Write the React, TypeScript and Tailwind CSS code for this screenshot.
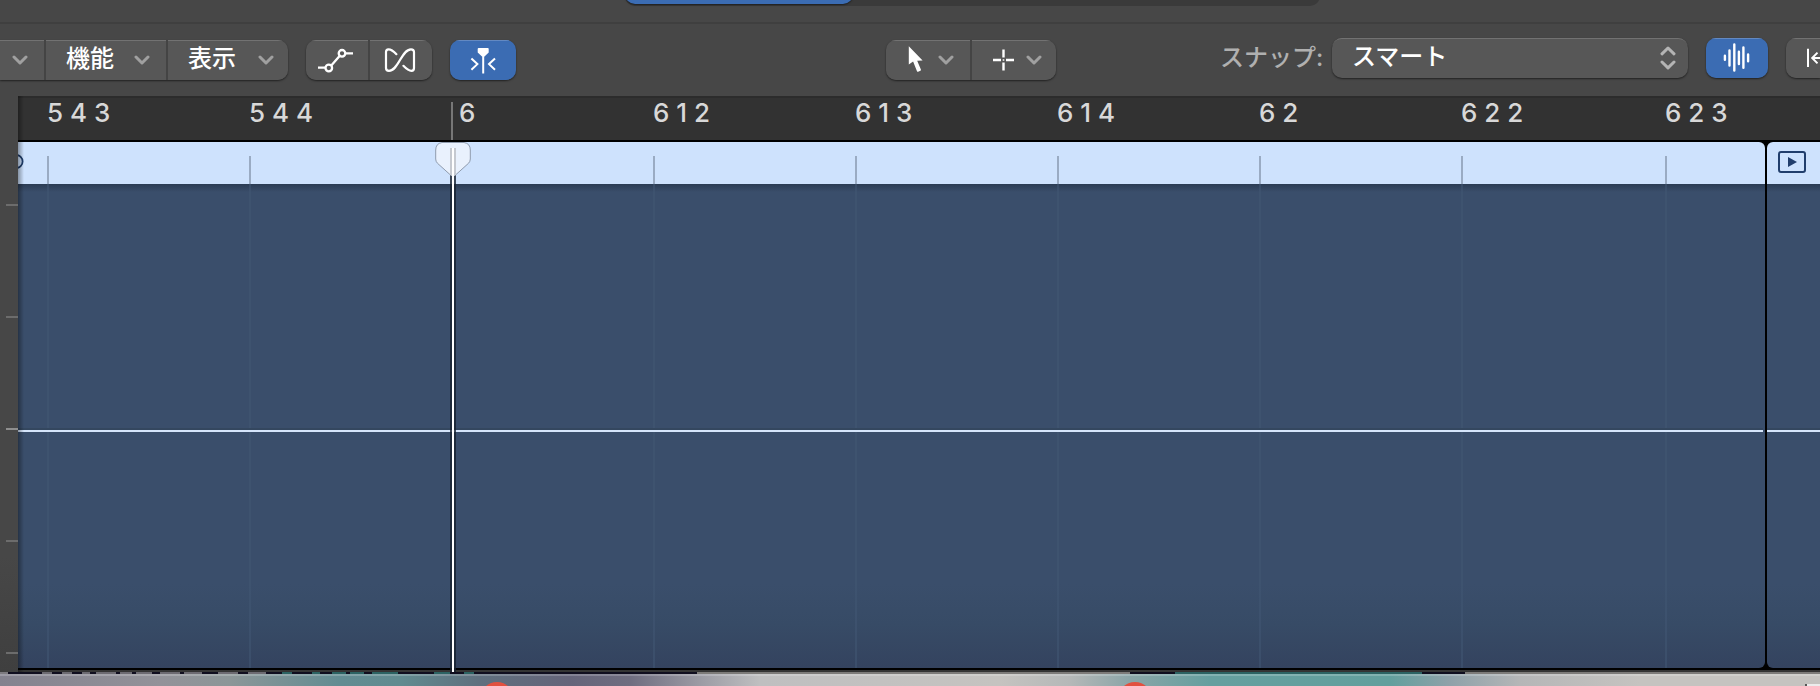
import type { ReactNode } from "react";
import clsx from "clsx";

const MARKS = [
  { label: "5 4 3" },
  { label: "5 4 4" },
  { label: "6", bar: true },
  { label: "6 1 2" },
  { label: "6 1 3" },
  { label: "6 1 4" },
  { label: "6 2" },
  { label: "6 2 2", wide: true },
  { label: "6 2 3" },
];

// what shows of the window behind, between the editor and the dock
const BEHIND = [
  "w-2 bg-[#7d7b80]",
  "w-[34px] bg-[#100e1f]",
  "w-[10px] bg-[#6d6b72]",
  "w-[10px] bg-[#100e1f]",
  "w-[10px] bg-[#6d6b72]",
  "w-[10px] bg-[#100e1f]",
  "w-[8px] bg-[#6d6b72]",
  "w-[6px] bg-[#100e1f]",
  "w-[20px] bg-[#6d6b72]",
  "w-[4px] bg-[#100e1f]",
  "w-[12px] bg-[#6d6b72]",
  "w-[4px] bg-[#100e1f]",
  "w-[16px] bg-[#6d6b72]",
  "w-[8px] bg-[#100e1f]",
  "w-[20px] bg-[#6d6b72]",
  "w-[4px] bg-[#100e1f]",
  "w-[18px] bg-[#6d6b72]",
  "w-[16px] bg-[#100e1f]",
  "w-[20px] bg-[#6d6b72]",
  "w-[10px] bg-[#100e1f]",
  "w-[18px] bg-[#6d6b72]",
  "w-[16px] bg-[#100e1f]",
  "w-[10px] bg-[#2c6363]",
  "w-[20px] bg-[#100e1f]",
  "w-[8px] bg-[#2c6363]",
  "w-[12px] bg-[#100e1f]",
  "w-[14px] bg-[#2c6363]",
  "w-[4px] bg-[#100e1f]",
  "w-[14px] bg-[#2c6363]",
  "w-[8px] bg-[#100e1f]",
  "w-[26px] bg-[#2c6363]",
  "w-[36px] bg-[#100e1f]",
  "w-[16px] bg-[#2c6363]",
  "w-[14px] bg-[#100e1f]",
  "w-[10px] bg-[#2c6363]",
  "w-[223px] bg-[#100e1f]",
  "w-[433px] bg-[#7d7b79]",
  "w-[45px] bg-[#100e1f]",
  "w-[247px] bg-[#2c6363]",
  "w-[43px] bg-[#100e1f]",
];

function Chevron() {
  return (
    <svg className="h-[10px] w-4 shrink-0" viewBox="0 0 16 10" fill="none" stroke="#a0a0a0" strokeWidth="3" strokeLinecap="round" strokeLinejoin="round" aria-hidden="true">
      <path d="M2 2 8 8 14 2" />
    </svg>
  );
}

function Group({ children, className }: { children: ReactNode; className?: string }) {
  return (
    <div className={clsx("flex h-10 shrink-0 gap-[2px] overflow-hidden bg-[#444444] shadow-[0_1px_2px_rgba(0,0,0,0.55)]", className)}>
      {children}
    </div>
  );
}

function Tool({ label, active, className, children }: { label: string; active?: boolean; className?: string; children: ReactNode }) {
  return (
    <button
      type="button"
      aria-label={label}
      className={clsx(
        "flex h-10 shrink-0 items-center",
        active
          ? "bg-[#3b6cb3] shadow-[inset_0_2px_0_-1px_#6389c2]"
          : "bg-[#575757] shadow-[inset_0_2px_0_-1px_#727272]",
        className
      )}
    >
      {children}
    </button>
  );
}

function Toolbar() {
  return (
    <div className="flex h-[72px] items-center overflow-hidden">
      <Group className="rounded-r-[10px]">
        <Tool label="編集" className="w-11 pl-3">
          <Chevron />
        </Tool>
        <Tool label="機能" className="w-[120px] justify-between pr-4 pl-5">
          <span className="pb-[2px] text-[24px] leading-8 font-medium text-white">機能</span>
          <Chevron />
        </Tool>
        <Tool label="表示" className="w-[120px] justify-between pr-[14px] pl-5">
          <span className="pb-[2px] text-[24px] leading-8 font-medium text-white">表示</span>
          <Chevron />
        </Tool>
      </Group>

      <Group className="ml-[18px] rounded-[10px]">
        <Tool label="オートメーション" className="w-[62px]">
          <svg className="h-10 w-[62px]" viewBox="0 0 62 40" fill="none" stroke="#fff" strokeWidth="2.3">
            <path d="M12 27.7h7.5M25.3 25.6 34 15.6M39.5 13.3H47" />
            <circle cx="22.8" cy="28" r="3.3" />
            <circle cx="36" cy="13.3" r="3.3" />
          </svg>
        </Tool>
        <Tool label="Flex" className="w-[62px]">
          <svg className="h-10 w-[62px]" viewBox="0 0 62 40" fill="none" stroke="#fff" strokeWidth="2.2" strokeLinecap="round">
            <path d="M26.4 14.2C23.5 11 20.5 9.3 18.5 9.3Q16 9.3 16 12V28Q16 30.8 19 30.8C28.5 30.8 31.5 9.3 41 9.3Q44 9.3 44 12V28Q44 30.8 41.5 30.8C39.5 30.8 36.5 29 33.4 25.8" />
          </svg>
        </Tool>
      </Group>

      <Group className="ml-[18px] rounded-[10px]">
        <Tool label="キャッチ" active className="w-[66px]">
          <svg className="h-10 w-[66px]" viewBox="0 0 66 40" fill="none" stroke="#fff" strokeWidth="2">
            <path d="M28.6 8H37.8Q38.7 8 38.7 9V12.4L34.5 16.5H32L27.7 12.4V9Q27.7 8 28.6 8Z" fill="#fff" stroke="none" />
            <path d="M33.2 15V33.6M21.4 18.4 27.4 24.1 21.4 29.8M45 18.4 39 24.1 45 29.8" />
          </svg>
        </Tool>
      </Group>

      <div className="grow-[9]" />

      <Group className="rounded-[10px]">
        <Tool label="ポインタツール" className="w-[84px]">
          <svg className="h-10 w-[52px]" viewBox="0 0 52 40" fill="#fff">
            <path d="M22.8 6.3V24.5L27.1 21.5 31 31.2Q31.3 32 32.1 31.7L34.4 30.8Q35.2 30.4 34.9 29.6L31.2 20.8 36.6 20.4Z" />
          </svg>
          <Chevron />
        </Tool>
        <Tool label="マーキーツール" className="w-[84px]">
          <svg className="h-10 w-[54px]" viewBox="0 0 54 40" fill="none" stroke="#fff" strokeWidth="2.4">
            <path d="M21 20h8M34 20h8M31.5 9.5v8M31.5 22.5v8" />
            <path d="M30.7 20h1.6" strokeWidth="1.6" />
          </svg>
          <Chevron />
        </Tool>
      </Group>

      <div className="grow-[4]" />

      <div className="flex shrink-0 items-center pb-1">
        <label htmlFor="snap" className="w-[112px] text-[24px] leading-8 font-medium whitespace-nowrap text-[#b0b0b0]">
          スナップ:
        </label>
        <div className="relative flex">
          <select
            id="snap"
            defaultValue="smart"
            className="h-10 w-[356px] appearance-none rounded-[10px] bg-[#575757] pr-10 pb-[2px] pl-5 text-[24px] leading-8 font-medium text-white shadow-[inset_0_2px_0_-1px_#727272,0_1px_2px_rgba(0,0,0,0.55)]"
          >
            <option value="smart">スマート</option>
            <option value="bar">小節</option>
            <option value="beat">拍</option>
          </select>
          <svg className="pointer-events-none absolute top-2 right-3 h-6 w-4" viewBox="0 0 16 24" fill="none" stroke="#b4b4b4" strokeWidth="3" strokeLinecap="round" strokeLinejoin="round" aria-hidden="true">
            <path d="M2 7.8 8 2 14 7.8M2 16 8 21.8 14 16" />
          </svg>
        </div>
        <Group className="ml-[18px] rounded-[10px]">
          <Tool label="波形" active className="w-[62px]">
            <svg className="h-10 w-[62px]" viewBox="0 0 62 40" fill="none" stroke="#fff" strokeWidth="2.4" strokeLinecap="round">
              <path d="M18.9 17.8v4M23.5 12.5v15M28.3 6.5v26M32.9 13.8v12.2M37.4 9.5v20.3M42.1 16.5v6.7" />
            </svg>
          </Tool>
        </Group>
        <Group className="ml-[18px] rounded-l-[10px]">
          <Tool label="横方向ズーム" className="w-[34px]">
            <svg className="h-10 w-[34px]" viewBox="0 0 34 40" fill="none" stroke="#fff" strokeWidth="2">
              <path d="M22 10.7V29M34 20H26.5M31.5 14.6 26.2 20 31.5 25.4" />
            </svg>
          </Tool>
        </Group>
      </div>
    </div>
  );
}

function cellWidth(wide?: boolean) {
  return wide ? "w-[204px]" : "w-[202px]";
}

function Ruler() {
  return (
    <div className="flex h-11 overflow-hidden border-t-2 border-[#2c2c2c] bg-[#323232] pl-[29px]">
      {MARKS.map((m) => (
        <div key={m.label} className={clsx("flex shrink-0", cellWidth(m.wide))}>
          {m.bar && <div className="mt-1 mr-[6px] w-[2px] bg-[#777777]" />}
          <span className="text-[26px] leading-[30px] font-medium whitespace-nowrap text-[#d8d8d8]">{m.label}</span>
        </div>
      ))}
    </div>
  );
}

function Regions() {
  return (
    <div className="flex gap-[2px] bg-black py-[2px]">
      <div className="min-w-0 flex-1 overflow-hidden rounded-r-[6px]">
        <div className="relative flex h-[42px] items-end bg-[#cee2fd] pl-[29px]">
          <svg className="absolute top-3 left-0 h-4 w-2" viewBox="0 0 8 16" fill="none" stroke="#1f3d6b" strokeWidth="1.8" aria-hidden="true">
            <circle cx="-2" cy="7.5" r="6.6" />
          </svg>
          {MARKS.map((m) => (
            <div key={m.label} className={clsx("h-7 shrink-0 border-l-2", m.bar ? "border-transparent" : "border-[#9aabc3]", cellWidth(m.wide))} />
          ))}
        </div>
        <div className="relative flex h-[484px] bg-[linear-gradient(#2b3c54_0px,#3a4e6b_8px,#3a4e6b_400px,#374b66_440px,#34435f_484px)] pl-[29px]">
          {MARKS.map((m) => (
            <div key={m.label} className={clsx("shrink-0 border-l-2 border-[#41567390]", cellWidth(m.wide))} />
          ))}
          <div className="absolute inset-x-0 top-[244px] mr-[2px] h-1 border-t-2 border-t-[#34475f] bg-[#d5e5fb]" />
        </div>
      </div>
      <div className="w-[53px] shrink-0 overflow-hidden rounded-l-[6px]">
        <div className="flex h-[42px] items-center bg-[#cee2fd] pb-[2px] pl-[11px]">
          <svg className="h-[22px] w-7" viewBox="0 0 28 22" fill="none" stroke="#213e6c" strokeWidth="2" aria-hidden="true">
            <rect x="1" y="1" width="26" height="20" rx="2" />
            <path d="M10 6v10l9-5z" fill="#213e6c" stroke="none" />
          </svg>
        </div>
        <div className="relative h-[484px] bg-[linear-gradient(#2b3c54_0px,#3a4e6b_8px,#3a4e6b_400px,#374b66_440px,#34435f_484px)]">
          <div className="absolute inset-x-0 top-[244px] h-1 border-t-2 border-t-[#34475f] bg-[#d5e5fb]" />
        </div>
      </div>
    </div>
  );
}

function Playhead() {
  return (
    <div className="pointer-events-none absolute top-[46px] bottom-0 left-[417px] w-9">
      <div className="absolute top-7 bottom-0 left-[15px] w-[6px] bg-[#17212e]/80" />
      <svg className="absolute top-0 left-0 h-9 w-9" viewBox="0 0 36 36" aria-hidden="true">
        <path d="M7 .5H29Q35.3 1.5 35.3 8V17Q35.3 19.5 33.5 21.3L20.5 33Q18 35.2 15.5 33L2.5 21.3Q.7 19.5 .7 17V8Q.7 1.5 7 .5Z" fill="#e9f1fd" stroke="#8f9bad" strokeWidth="1" />
        <path d="M15 6h2v28l-2-1.5zM19 6h2v26.5L19 34z" fill="#c5c9d0" />
      </svg>
      <div className="absolute top-[6px] bottom-0 left-[17px] w-[2px] bg-white" />
    </div>
  );
}

function Dock() {
  return (
    <div className="flex h-3 items-start overflow-hidden border-t-2 border-white/20 bg-[linear-gradient(90deg,#84828f_0px,#929299_160px,#8c9698_230px,#628c92_340px,#618b90_400px,#5f6f7e_480px,#65647a_570px,#6f6d80_630px,#9b9ba4_700px,#bfbfc0_760px,#c5c3c0_1000px,#b5b8b8_1070px,#8aa5a7_1130px,#659f9f_1210px,#629f9d_1390px,#8fa1a9_1450px,#b5b6b7_1520px,#c5c3c0_1640px,#c5c3c0_1820px)] pt-[6px]">
      <div className="ml-[480px] size-[34px] shrink-0 rounded-full bg-[#e2503f]" />
      <div className="ml-[604px] size-[34px] shrink-0 rounded-full bg-[#e2503f]" />
      <div className="mt-[2px] ml-auto h-2 w-[15px] border-l-2 border-[#555555] bg-[#ececec]" />
    </div>
  );
}

export default function App() {
  return (
    <div className="overflow-hidden bg-[#474747] font-['Inter','Noto_Sans_CJK_JP',sans-serif]">
      {/* the tab strip is scrolled mostly out of view */}
      <div className="-mt-6 flex h-12 items-start border-b-2 border-[#3f3f3f]">
        <div className="grow-[5]" />
        <div className="h-[30px] w-[695px] rounded-[10px] bg-[#3a3a3a]">
          <div className="h-7 w-[228px] rounded-[10px] bg-[#3b6cb3] shadow-[0_1px_2px_rgba(0,0,0,0.5)]" />
        </div>
        <div className="grow-[4]" />
      </div>

      <Toolbar />

      <div className="flex">
        <div className="flex w-[18px] shrink-0 flex-col items-end gap-[110px] bg-[linear-gradient(#474747_80%,#3f3f3f)] pt-[108px]">
          {[1, 0.5, 0, -0.5, -1].map((v) => (
            <div key={v} className={clsx("h-[2px] w-3", v === 0 ? "bg-[#8e8e8e]" : "bg-[#6c6c6c]")} />
          ))}
        </div>
        <div className="relative min-w-0 flex-1">
          <Ruler />
          <Regions />
          <div className="h-[2px] bg-[#343434]" />
          <div className="pointer-events-none absolute inset-y-0 left-0 w-[6px] bg-linear-to-r from-black/35 to-transparent" />
          <Playhead />
        </div>
      </div>

      <div className="flex h-[2px] bg-[#7d7b79]">
        {BEHIND.map((c, i) => (
          <div key={i} className={clsx("h-[2px] shrink-0", c)} />
        ))}
      </div>
      <Dock />
    </div>
  );
}
